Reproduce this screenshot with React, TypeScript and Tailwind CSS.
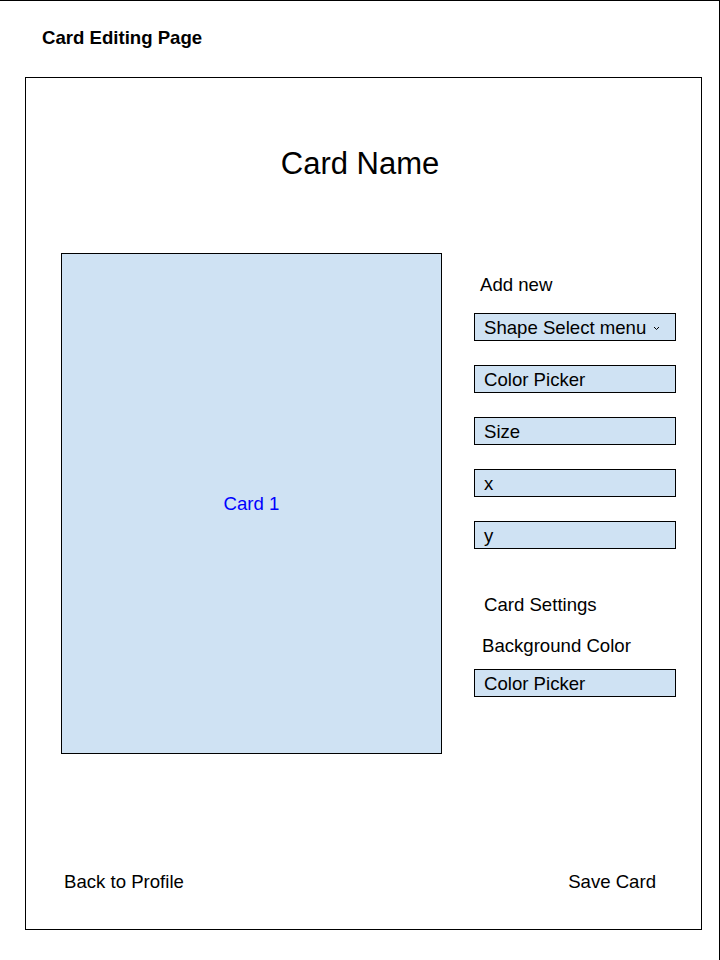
const fieldBox = "flex h-[28px] w-[202px] items-center border border-black bg-[#cfe2f3] pl-[9px] pt-[2px] text-[18.6px] leading-none";

// Card Editing Page wireframe
const App: React.FC = () => {
  const fields = ["Color Picker", "Size", "x", "y"];

  return (
    <div className="h-[960px] w-[720px] border-t border-r border-black bg-white font-['Liberation_Sans',Arial,sans-serif] text-black">
      <h1 className="pl-[42px] pt-[26px] text-[18.6px] font-bold leading-[22px]">Card Editing Page</h1>

      <div className="ml-[25px] mt-[28px] flex h-[853px] w-[677px] flex-col border border-black">
        <h2 className="pt-[68px] pr-[7px] text-center text-[31px] leading-[36px]">Card Name</h2>

        <div className="mt-[71px] flex pl-[35px]">
          <div className="flex h-[501px] w-[381px] items-center justify-center border border-black bg-[#cfe2f3] text-[18.6px] text-[#0000ff]">
            Card 1
          </div>

          <div className="ml-[32px] flex flex-col pt-[21px]">
            <p className="pl-[6px] text-[18.6px] leading-[22px]">Add new</p>
            <div className={`${fieldBox} mt-[17px] justify-between pr-[15px]`}>
              <span>Shape Select menu</span>
              <svg width="7" height="5" viewBox="0 0 7 5" className="mt-[1px]">
                <path d="M1 1 L3.5 3.5 L6 1" fill="none" stroke="black" strokeWidth="1" />
              </svg>
            </div>
            {fields.map((f) => (
              <div key={f} className={`${fieldBox} mt-[24px]`}>
                {f}
              </div>
            ))}

            <p className="mt-[45px] pl-[10px] text-[18.6px] leading-[22px]">Card Settings</p>
            <p className="mt-[19px] pl-[8px] text-[18.6px] leading-[22px]">Background Color</p>
            <div className={`${fieldBox} mt-[12px]`}>Color Picker</div>
          </div>
        </div>

        <div className="mt-auto flex justify-between pb-[36px] pl-[38px] pr-[45px] text-[18.6px] leading-[22px]">
          <span>Back to Profile</span>
          <span>Save Card</span>
        </div>
      </div>
    </div>
  );
};

export default App;
